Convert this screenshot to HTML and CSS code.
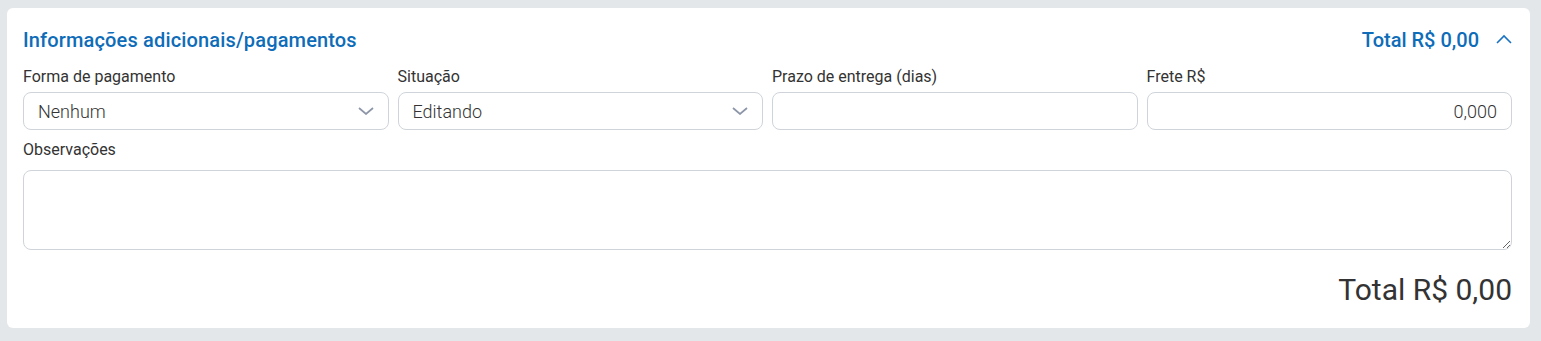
FILE: index.html
```html
<!DOCTYPE html>
<html lang="pt-BR">

<head>
    <meta charset="UTF-8">
    <meta name="viewport" content="width=device-width, initial-scale=1.0">
    <title>Informações adicionais</title>
    <link rel="stylesheet" href="styles.css">
</head>

<body>
    <section class="card">
        <div class="card-header">
            <h2 class="card-title">Informações adicionais/pagamentos</h2>
            <div class="header-total">
                <span>Total R$ 0,00</span>
                <svg class="toggle" width="16" height="10" viewBox="0 0 16 10">
                    <path d="M1 9 L8 2 L15 9" fill="none" stroke="#1a73c2" stroke-width="1.6" />
                </svg>
            </div>
        </div>
        <div class="row">
            <div class="field">
                <label class="field-label">Forma de pagamento</label>
                <div class="input select">
                    <span>Nenhum</span>
                    <svg width="16" height="8" viewBox="0 0 16 8">
                        <path d="M1 1 L8 7 L15 1" fill="none" stroke="#8d95a8" stroke-width="1.7" />
                    </svg>
                </div>
            </div>
            <div class="field">
                <label class="field-label">Situação</label>
                <div class="input select">
                    <span>Editando</span>
                    <svg width="16" height="8" viewBox="0 0 16 8">
                        <path d="M1 1 L8 7 L15 1" fill="none" stroke="#8d95a8" stroke-width="1.7" />
                    </svg>
                </div>
            </div>
            <div class="field">
                <label class="field-label">Prazo de entrega (dias)</label>
                <div class="input"></div>
            </div>
            <div class="field">
                <label class="field-label">Frete R$</label>
                <div class="input number">0,000</div>
            </div>
        </div>
        <div class="field">
            <label class="field-label obs-label">Observações</label>
            <textarea class="textarea"></textarea>
        </div>
        <div class="grand-total">Total R$ 0,00</div>
    </section>
</body>

</html>
```

FILE: styles.css
```css
* {
    margin: 0;
    box-sizing: border-box;
}

body {
    background-color: #e4e7e9;
    padding: 8px 11px 13px 7px;
    font-family: Roboto, "Liberation Sans", sans-serif;
    color: #333333;
    line-height: 1.5;
}

.card {
    background-color: #ffffff;
    border-radius: 6px;
    padding: 17px 18px 19px 16px;
}

.card-header {
    display: flex;
    justify-content: space-between;
    align-items: center;
    margin-bottom: 11px;
}

.card-title {
    font-size: 20px;
    font-weight: 500;
    line-height: 30px;
    letter-spacing: 0.15px;
    color: #0e6cb8;
}

.header-total {
    display: flex;
    align-items: center;
    gap: 17px;
    font-size: 20px;
    font-weight: 500;
    line-height: 30px;
    color: #0e6cb8;
}

.toggle {
    margin-top: -2px;
}

.row {
    display: flex;
    gap: 9px;
    margin-bottom: 9px;
}

.row .field {
    flex: 1;
}

.field {
    display: flex;
    flex-direction: column;
}

.field-label {
    font-size: 16px;
    line-height: 21px;
    margin-bottom: 5px;
    color: #333333;
}

.obs-label {
    margin-bottom: 10px;
}

.input {
    height: 38px;
    border: 1px solid #cfd4db;
    border-radius: 8px;
    padding: 0 14px;
    font-size: 18px;
    font-weight: 300;
    display: flex;
    align-items: center;
    color: #333333;
}

.select {
    justify-content: space-between;
}

.number {
    justify-content: flex-end;
}

.textarea {
    height: 80px;
    border: 1px solid #cfd4db;
    border-radius: 8px;
    resize: vertical;
    font-family: inherit;
    font-size: 16px;
}

.grand-total {
    text-align: right;
    font-size: 30px;
    font-weight: 400;
    margin-top: 20px;
    line-height: 1.3;
}
```
